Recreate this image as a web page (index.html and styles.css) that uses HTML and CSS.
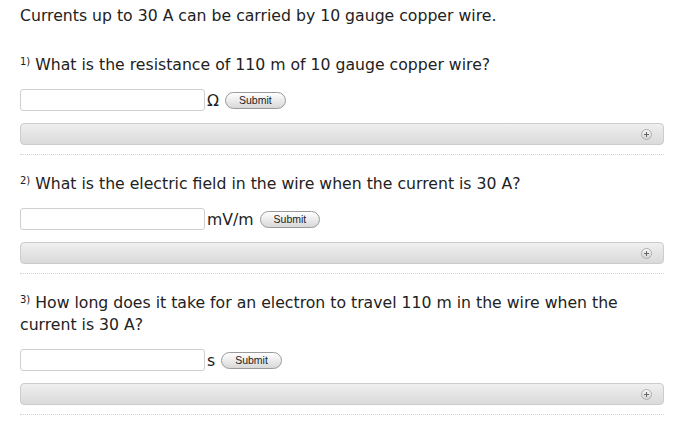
FILE: index.html
```html
<!DOCTYPE html>
<html>
<head>
<meta charset="utf-8">
<link rel="stylesheet" href="styles.css">
</head>
<body>
<div class="page">
  <p class="intro">Currents up to 30 A can be carried by 10 gauge copper wire.</p>

  <div class="question">
    <p class="q-text"><sup class="num">1)</sup> What is the resistance of 110 m of 10 gauge copper wire?</p>
    <div class="answer">
      <input class="field" type="text">
      <span class="unit">Ω</span>
      <button class="submit">Submit</button>
    </div>
    <div class="bar"><span class="plus"></span></div>
    <div class="rule"></div>
  </div>

  <div class="question">
    <p class="q-text"><sup class="num">2)</sup> What is the electric field in the wire when the current is 30 A?</p>
    <div class="answer">
      <input class="field" type="text">
      <span class="unit">mV/m</span>
      <button class="submit">Submit</button>
    </div>
    <div class="bar"><span class="plus"></span></div>
    <div class="rule"></div>
  </div>

  <div class="question">
    <p class="q-text"><sup class="num">3)</sup> How long does it take for an electron to travel 110 m in the wire when the current is 30 A?</p>
    <div class="answer">
      <input class="field" type="text">
      <span class="unit">s</span>
      <button class="submit">Submit</button>
    </div>
    <div class="bar"><span class="plus"></span></div>
    <div class="rule"></div>
  </div>
</div>
</body>
</html>
```

FILE: styles.css
```css
html, body {
  margin: 0;
  padding: 0;
  background: #ffffff;
}

.page {
  width: 644px;
  padding: 5px 0 0 20px;
  font-family: "DejaVu Sans", Verdana, sans-serif;
  font-size: 15.7px;
  color: #222222;
}

.intro {
  margin: 0;
  line-height: 22px;
}

.question {
  margin-top: 27px;
}

.question + .question {
  margin-top: 18px;
}

.q-text {
  margin: 0;
  line-height: 22px;
}

.num {
  font-size: 10px;
  vertical-align: 5px;
  line-height: 0;
}

.answer {
  display: flex;
  align-items: center;
  margin-top: 13px;
  height: 22px;
}

.field {
  box-sizing: border-box;
  width: 185px;
  height: 22px;
  margin: 0;
  border: 1px solid #cfcfcf;
  border-radius: 3px;
  background: #ffffff;
  padding: 0 4px;
}

.unit {
  margin-left: 2px;
  font-size: 15.7px;
  color: #222222;
}

.submit {
  box-sizing: border-box;
  margin-left: 6px;
  height: 17px;
  padding: 0 13px;
  border: 1px solid #9a9a9a;
  border-radius: 9px;
  background: linear-gradient(#ffffff, #d8d8d8);
  font-family: "Liberation Sans", Arial, sans-serif;
  font-size: 10.5px;
  line-height: 15px;
  color: #222222;
}

.bar {
  box-sizing: border-box;
  display: flex;
  align-items: center;
  justify-content: flex-end;
  margin-top: 12px;
  height: 22px;
  border: 1px solid #cccccc;
  border-radius: 4px;
  background: linear-gradient(#efefef, #dadada);
  padding-right: 11px;
}

.plus {
  position: relative;
  box-sizing: border-box;
  width: 11px;
  height: 11px;
  border-radius: 50%;
  border: 1px solid #b0b0b0;
  background: linear-gradient(#f6f6f6, #d4d4d4);
}

.plus::before,
.plus::after {
  content: "";
  position: absolute;
  background: #666666;
}

.plus::before {
  left: 2px;
  top: 4px;
  width: 5px;
  height: 1px;
}

.plus::after {
  left: 4px;
  top: 2px;
  width: 1px;
  height: 5px;
}

.rule {
  margin-top: 9px;
  border-top: 1px dotted #d4d4d4;
}
```
